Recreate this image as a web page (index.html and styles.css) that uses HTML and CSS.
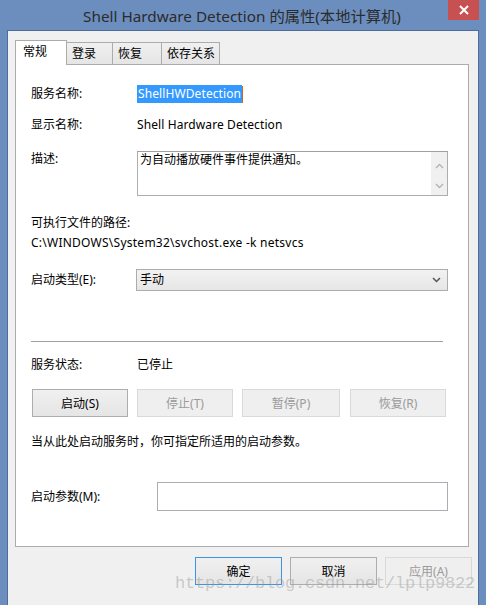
FILE: index.html
```html
<!DOCTYPE html>
<html lang="zh-CN">
<head>
<meta charset="utf-8">
<title>Shell Hardware Detection 的属性(本地计算机)</title>
<link rel="stylesheet" href="styles.css">
</head>
<body>
<div class="window">
  <div class="titlebar">
    <div class="title">Shell Hardware Detection 的属性(本地计算机)</div>
    <div class="close">
      <svg width="10" height="10" viewBox="0 0 10 10"><path d="M1 1L9 9M9 1L1 9" stroke="#fff" stroke-width="2"/></svg>
    </div>
  </div>
  <div class="client">
    <div class="tabs">
      <div class="tab active t1">常规</div>
      <div class="tab t2">登录</div>
      <div class="tab t3">恢复</div>
      <div class="tab t4">依存关系</div>
    </div>
    <div class="panel">
      <div class="row r1"><span class="label">服务名称:</span><span class="sel">ShellHWDetection</span><span class="caret"></span></div>
      <div class="row r2"><span class="label">显示名称:</span><span class="value">Shell Hardware Detection</span></div>
      <div class="row r3"><span class="label desc-label">描述:</span>
        <div class="textarea">
          <div class="ta-text">为自动播放硬件事件提供通知。</div>
          <div class="ta-scroll">
            <svg width="9" height="6" viewBox="0 0 9 6"><path d="M1 5L4.5 1.5L8 5" fill="none" stroke="#b4b4b4" stroke-width="1.4"/></svg>
            <svg width="9" height="6" viewBox="0 0 9 6"><path d="M1 1L4.5 4.5L8 1" fill="none" stroke="#b4b4b4" stroke-width="1.4"/></svg>
          </div>
        </div>
      </div>
      <div class="row r4"><span>可执行文件的路径:</span></div>
      <div class="row r5"><span class="path">C:\WINDOWS\System32\svchost.exe -k netsvcs</span></div>
      <div class="row r6"><span class="label">启动类型(E):</span>
        <div class="select"><span>手动</span>
          <svg width="9" height="6" viewBox="0 0 9 6"><path d="M1 1L4.5 4.5L8 1" fill="none" stroke="#555" stroke-width="1.5"/></svg>
        </div>
      </div>
      <div class="sep"></div>
      <div class="row r7"><span class="label">服务状态:</span><span>已停止</span></div>
      <div class="btnrow">
        <div class="btn">启动(S)</div>
        <div class="btn disabled">停止(T)</div>
        <div class="btn disabled">暂停(P)</div>
        <div class="btn disabled">恢复(R)</div>
      </div>
      <div class="row r9"><span>当从此处启动服务时，你可指定所适用的启动参数。</span></div>
      <div class="row r10"><span class="label wide">启动参数(M):</span><div class="input"></div></div>
    </div>
    <div class="footer">
      <div class="btn big focus">确定</div>
      <div class="btn big">取消</div>
      <div class="btn big disabled">应用(A)</div>
    </div>
  </div>
</div>
<div class="watermark">https://blog.csdn.net/lplp9822</div>
</body>
</html>
```
FILE: styles.css
```css
html, body {
  margin: 0;
  padding: 0;
}
body {
  width: 486px;
  height: 605px;
  background: #6b8ebe;
  font-family: "Noto Sans", "Noto Sans CJK SC", sans-serif;
  font-size: 12px;
  color: #000;
  position: relative;
  overflow: hidden;
}
.window {
  display: flex;
  flex-direction: column;
  padding: 0 7px 7px 7px;
}
.titlebar {
  height: 30px;
  position: relative;
  display: flex;
  align-items: center;
  justify-content: center;
}
.title {
  font-family: "Noto Sans", "Noto Sans CJK SC", sans-serif;
  font-size: 15.3px;
  color: #2b2b2b;
  margin-top: -1px;
  margin-left: -2px;
}
.close {
  position: absolute;
  top: 0;
  right: 0;
  width: 31px;
  height: 20px;
  background: #c75050;
  display: flex;
  align-items: center;
  justify-content: center;
}
.client {
  height: 566px;
  border: 1px solid #4e6d9a;
  background: #f0f0f0;
  padding-top: 9px;
  display: flex;
  flex-direction: column;
}
.tabs {
  display: flex;
  height: 24px;
  margin-left: 7px;
  position: relative;
  z-index: 2;
  align-items: flex-end;
}
.tab {
  box-sizing: border-box;
  height: 22px;
  border: 1px solid #acacac;
  border-bottom: none;
  background: linear-gradient(#f0f0f0, #e5e5e5);
  line-height: 21px;
  padding-left: 5px;
  margin-left: -1px;
}
.tab.t1 { margin-left: 0; }
.tab.active {
  height: 25px;
  margin-bottom: -1px;
  background: #fff;
  padding-left: 7px;
  line-height: 22px;
  width: 52px;
}
.t2 { width: 47px; }
.t3 { width: 50px; }
.t4 { width: 59px; }
.panel {
  margin: 0 9px 0 7px;
  height: 483px;
  box-sizing: border-box;
  border: 1px solid #acacac;
  background: #fff;
  padding: 0 20px 0 15px;
  display: flex;
  flex-direction: column;
}
.row {
  display: flex;
  align-items: center;
  line-height: 18px;
  height: 18px;
  white-space: nowrap;
}
.label {
  width: 106px;
  flex: none;
}
.label.wide { width: 126px; }
.r1 { margin-top: 20px; }
.sel {
  background: #3399ff;
  color: #fff;
  padding: 0 1px;
  letter-spacing: 0.1px;
}
.caret {
  width: 1px;
  height: 17px;
  background: #c86a1e;
}
.value { letter-spacing: 0.1px; }
.path { letter-spacing: 0.25px; }
.r2 { margin-top: 13px; }
.r3 {
  margin-top: 17px;
  height: 45px;
  align-items: flex-start;
}
.desc-label { margin-top: -1px; }
.textarea {
  box-sizing: border-box;
  width: 311px;
  height: 45px;
  border: 1px solid #abadb3;
  border-top-color: #a0a0a0;
  display: flex;
  justify-content: space-between;
  background: #fff;
}
.ta-text {
  padding: 1px 0 0 2px;
  line-height: 14px;
}
.ta-scroll {
  width: 16px;
  background: #f0f0f0;
  display: flex;
  flex-direction: column;
  align-items: center;
  justify-content: space-between;
  padding: 11px 0 6px;
  box-sizing: border-box;
}
.r4 { margin-top: 18px; }
.r5 { margin-top: 2px; }
.r6 { margin-top: 17px; height: 21px; }
.r6 .label { width: 105px; }
.select {
  box-sizing: border-box;
  width: 312px;
  height: 22px;
  border: 1px solid #acacac;
  background: linear-gradient(#f2f2f2, #e6e6e6);
  display: flex;
  align-items: center;
  justify-content: space-between;
  padding: 0 6px 0 3px;
}
.sep {
  margin-top: 51px;
  height: 1px;
  background: #a0a0a0;
  width: 412px;
}
.r7 { margin-top: 14px; }
.btnrow {
  margin-top: 15px;
  display: flex;
  gap: 9px;
  margin-left: 1px;
}
.btn {
  box-sizing: border-box;
  width: 96px;
  height: 28px;
  border: 1px solid #adadad;
  background: linear-gradient(#f0f0f0, #e5e5e5);
  display: flex;
  align-items: center;
  justify-content: center;
}
.btn.disabled {
  border-color: #d9d9d9;
  background: #efefef;
  color: #9a9a9a;
}
.btnrow .btn:nth-child(3) { width: 98px; }
.btnrow .btn:nth-child(4) { margin-left: 1px; }
.r9 { margin-top: 16px; }
.r10 { margin-top: 31px; height: 29px; }
.input {
  box-sizing: border-box;
  width: 291px;
  height: 29px;
  border: 1px solid #abadb3;
  background: #fff;
}
.footer {
  margin-top: 10px;
  display: flex;
  justify-content: flex-end;
  gap: 8px;
  padding-right: 6px;
}
.btn.big { width: 87px; }
.btn.focus { border-color: #3c94e5; }
.watermark {
  position: absolute;
  left: 175px;
  top: 574px;
  font-family: "Liberation Mono", monospace;
  font-size: 17px;
  color: rgba(150, 150, 150, 0.45);
  letter-spacing: -0.2px;
  white-space: nowrap;
  pointer-events: none;
}
```
